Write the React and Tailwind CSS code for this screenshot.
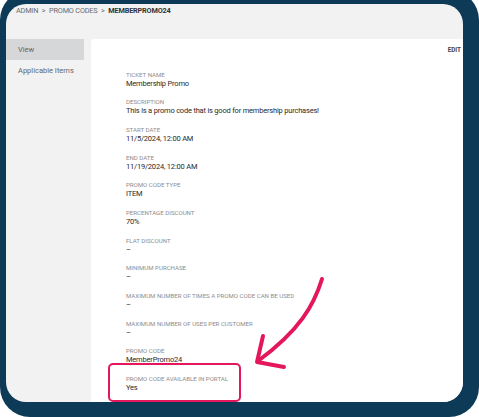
import React from 'react'

const fields = [
  ['Ticket Name', 'Membership Promo'],
  ['Description', 'This is a promo code that is good for membership purchases!'],
  ['Start Date', '11/5/2024, 12:00 AM'],
  ['End Date', '11/19/2024, 12:00 AM'],
  ['Promo Code Type', 'ITEM'],
  ['Percentage Discount', '70%'],
  ['Flat Discount', '–'],
  ['Minimum Purchase', '–'],
  ['Maximum Number of Times a Promo Code Can Be Used', '–'],
  ['Maximum Number of Uses per Customer', '–'],
  ['Promo Code', 'MemberPromo24'],
  ['Promo Code Available in Portal', 'Yes'],
]

export default function App() {
  return (
    <div className="relative w-[479px] h-[417px] overflow-hidden bg-white" style={{ fontFamily: 'Roboto, "Liberation Sans", sans-serif' }}>
      {/* device frame */}
      <div className="-mt-[10px] w-[479px] h-[427px] bg-[#0d3a57] rounded-[30px] pl-[6px] pt-[14px] pr-[16px] pb-[15px]">
        <div className="w-full h-full bg-[#f2f2f2] rounded-[20px] overflow-hidden flex flex-col">

          {/* Breadcrumb */}
          <div className="h-[35px] shrink-0 pl-[10px] pt-[2px] text-[7.3px] leading-[10px] text-[#6b6b6b] tracking-tight">
            ADMIN <span className="mx-[2px]">&gt;</span> PROMO CODES <span className="mx-[2px]">&gt;</span> <span className="font-bold text-[#333]">MEMBERPROMO24</span>
          </div>

          <div className="flex flex-1 min-h-0">
            {/* Sidebar */}
            <div className="w-[78px] shrink-0 text-[7.5px] text-[#666]">
              <div className="h-[21px] bg-[#d6d7d9] pl-[12px] flex items-center">View</div>
              <div className="h-[21px] pl-[12px] flex items-center">Applicable Items</div>
            </div>

            {/* Main card */}
            <div className="relative ml-[7px] flex-1 bg-white rounded-tl-[3px] pl-[35px] pr-[2px]">
              <div className="flex justify-end pt-[7px] text-[6.3px] leading-[8px] font-bold text-[#444]">EDIT</div>
              <div className="mt-[15.5px]">
                {fields.map(([label, value]) => (
                  <div key={label} className="h-[27.7px]">
                    <p className="text-[6.1px] leading-[9px] uppercase text-[#8d8d8d]">{label}</p>
                    <p className="text-[7.5px] leading-[10px] tracking-[-0.2px] text-[#2a2a2a]">{value}</p>
                  </div>
                ))}
              </div>

              {/* highlight box */}
              <div className="absolute left-[17px] top-[324px] w-[133px] h-[39px] border-[2px] border-[#e5175c] rounded-[5px]" />
            </div>
          </div>
        </div>
      </div>

      {/* arrow annotation */}
      <svg className="absolute left-0 top-0 pointer-events-none" width="479" height="417" viewBox="0 0 479 417">
        <path d="M322 279 C 314 305, 300 330, 258 361" fill="none" stroke="#e5175c" strokeWidth="4" strokeLinecap="round" />
        <path d="M263 336 L 257 362 L 284 367" fill="none" stroke="#e5175c" strokeWidth="4" strokeLinecap="round" strokeLinejoin="round" />
      </svg>
    </div>
  )
}
